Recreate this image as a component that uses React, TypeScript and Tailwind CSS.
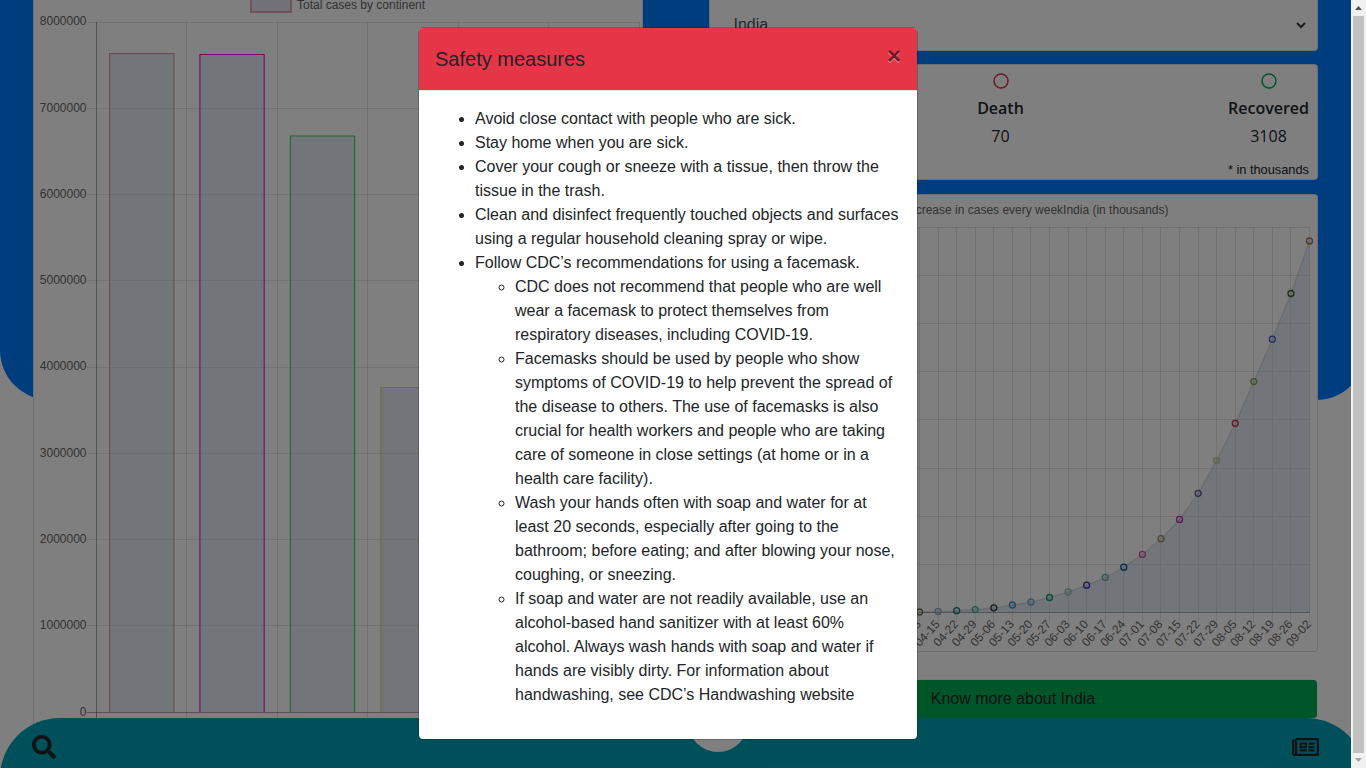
import React from "react";
import { FaSearch, FaRegNewspaper } from "react-icons/fa";

const barTicks = [
  { label: "8000000", y: 22.5, base: 25 },
  { label: "7000000", y: 108.5, base: 112 },
  { label: "6000000", y: 194.5, base: 198 },
  { label: "5000000", y: 280.5, base: 284 },
  { label: "4000000", y: 367.5, base: 370 },
  { label: "3000000", y: 453.5, base: 457 },
  { label: "2000000", y: 539.5, base: 543 },
  { label: "1000000", y: 625.5, base: 629 },
];

const bars = [
  { x: 109.6, y: 53.5, color: "#dc94a6" },
  { x: 199.9, y: 54.5, color: "#e912e9" },
  { x: 290.4, y: 136, color: "#30d858" },
  { x: 380.9, y: 387.5, color: "#e4d86c" },
];

const BAR_WIDTH = 64.3;

const cases = [
  { label: "04-08", y: 612, color: "#68704a" },
  { label: "04-15", y: 611.4, color: "#88a8b8" },
  { label: "04-22", y: 610.7, color: "#16787c" },
  { label: "04-29", y: 609.6, color: "#2cc07c" },
  { label: "05-06", y: 607.8, color: "#2c3c30" },
  { label: "05-13", y: 605, color: "#2c98cc" },
  { label: "05-20", y: 602, color: "#70a8d8" },
  { label: "05-27", y: 597.5, color: "#0c9c6c" },
  { label: "06-03", y: 592, color: "#94c49c" },
  { label: "06-10", y: 585.2, color: "#4828b4" },
  { label: "06-17", y: 577.4, color: "#68b4ac" },
  { label: "06-24", y: 567.2, color: "#0c549c" },
  { label: "07-01", y: 554.4, color: "#d8549c" },
  { label: "07-08", y: 538.7, color: "#a09058" },
  { label: "07-15", y: 519.4, color: "#c42c90" },
  { label: "07-22", y: 493.3, color: "#64508c" },
  { label: "07-29", y: 460.4, color: "#c8cc9c" },
  { label: "08-05", y: 423.3, color: "#c42c44" },
  { label: "08-12", y: 381.6, color: "#80ac44" },
  { label: "08-19", y: 339.2, color: "#4c60c4" },
  { label: "08-26", y: 293.5, color: "#485c24" },
  { label: "09-02", y: 241, color: "#a87050" },
];

const lineX = (i: number) => 1309.5 - (cases.length - 1 - i) * 18.57;
const gridX = (i: number) => Math.floor(lineX(i)) + 0.5;
const linePoints = cases.map((c, i) => `${lineX(i)},${c.y}`).join(" ");
const lineRows = [227.5, 275.5, 323.5, 371.5, 419.5, 468.5, 516.5, 564.5];

function BarChart() {
  return (
    <svg width="608" height="768" viewBox="34 0 608 768" fontSize="12" fill="#666" className="block">
      <rect x="251" y="-1" width="40" height="13" fill="#dfe5ef" stroke="#e4a4b4" strokeWidth="2" />
      <text x="297" y="9">Total cases by continent</text>
      <g stroke="rgba(0,0,0,0.1)">
        {barTicks.map((t) => (
          <line key={t.y} x1="87" x2="640" y1={t.y} y2={t.y} />
        ))}
        {[186.5, 277.5, 367.5, 458.5, 548.5, 639.5].map((x) => (
          <line key={x} x1={x} x2={x} y1="22" y2="723" />
        ))}
      </g>
      <g stroke="rgba(0,0,0,0.35)">
        <line x1="96.5" x2="96.5" y1="22" y2="723" />
        <line x1="87" x2="640" y1="712.5" y2="712.5" />
      </g>
      {barTicks.map((t) => (
        <text key={t.label} x="86.5" y={t.base} textAnchor="end">{t.label}</text>
      ))}
      <text x="86.5" y="716" textAnchor="end">0</text>
      {bars.map((b) => (
        <g key={b.x}>
          <rect x={b.x} y={b.y} width={BAR_WIDTH} height={712.5 - b.y} fill="rgba(170,190,220,0.3)" />
          <path d={`M${b.x} 712.5V${b.y}h${BAR_WIDTH}V712.5`} fill="none" stroke={b.color} strokeWidth="1.1" />
        </g>
      ))}
    </svg>
  );
}

function LineChart() {
  return (
    <svg width="607" height="456" viewBox="710 195 607 456" fontSize="12" fill="#666" className="block">
      <text x="1168.5" y="214" textAnchor="end">Increase in cases every weekIndia (in thousands)</text>
      <g stroke="rgba(0,0,0,0.1)">
        {lineRows.map((y) => (
          <line key={y} x1="740" x2="1310" y1={y} y2={y} />
        ))}
        {cases.map((c, i) => (
          <line key={c.label} x1={gridX(i)} x2={gridX(i)} y1="227" y2="622" />
        ))}
      </g>
      <line x1="740" x2="1310" y1="612.5" y2="612.5" stroke="rgba(0,0,0,0.35)" />
      <polygon points={`${linePoints} 1309.5,612.5 919,612.5`} fill="rgba(170,190,220,0.3)" />
      <polyline points={linePoints} fill="none" stroke="rgba(0,0,0,0.1)" strokeWidth="1.5" />
      {cases.map((c, i) => (
        <g key={c.label}>
          <circle cx={lineX(i)} cy={c.y} r="3" fill="rgba(170,190,220,0.3)" stroke={c.color} strokeWidth="1.3" />
          <text
            textAnchor="end"
            transform={`translate(${lineX(i) + 0.8} 623.2) rotate(-48)`}
            y="2"
          >
            {c.label}
          </text>
        </g>
      ))}
    </svg>
  );
}

function Stat({ color, title, value }: { color: string; title: string; value: string }) {
  return (
    <div className="flex flex-col items-center font-['Open_Sans','Noto_Sans',sans-serif] text-base leading-6">
      <svg width="16" height="16" viewBox="0 0 16 16" className="mb-[7px]">
        <circle cx="8" cy="8" r="7" fill="none" stroke={color} strokeWidth="1.5" />
      </svg>
      <div className="font-semibold">{title}</div>
      <div className="mt-1">{value}</div>
    </div>
  );
}

function Scrollbar() {
  return (
    <div className="flex h-full w-[15px] shrink-0 flex-col items-center bg-[#f1f1f1]">
      <svg width="15" height="16" viewBox="0 0 15 16" className="shrink-0">
        <path d="M4 10h7L7.5 6z" fill="#505050" />
      </svg>
      <div className="w-[11px] flex-1 bg-[#c1c1c1]" />
      <svg width="15" height="15" viewBox="0 0 15 15" className="shrink-0">
        <path d="M4 5h7L7.5 9z" fill="#a3a3a3" />
      </svg>
    </div>
  );
}

function SafetyModal() {
  return (
    <div className="absolute left-[418px] top-[27px] w-[500px] rounded-[5px] border border-black/20 bg-white bg-clip-padding">
      <div className="flex items-start justify-between rounded-t-[4px] border-b border-[#dee2e6] bg-[#e63546] p-4">
        <h5 className="text-xl leading-[30px]">Safety measures</h5>
        <button className="text-2xl font-bold leading-6 text-black opacity-50 [text-shadow:0_1px_0_#fff]">×</button>
      </div>
      <div className="p-4">
        <ul className="mb-4 list-disc pl-10">
          <li>Avoid close contact with people who are sick.</li>
          <li>Stay home when you are sick.</li>
          <li>Cover your cough or sneeze with a tissue, then throw the tissue in the trash.</li>
          <li>Clean and disinfect frequently touched objects and surfaces using a regular household cleaning spray or wipe.</li>
          <li>
            Follow CDC’s recommendations for using a facemask.
            <ul className="list-[circle] pl-10">
              <li>CDC does not recommend that people who are well wear a facemask to protect themselves from respiratory diseases, including COVID-19.</li>
              <li>Facemasks should be used by people who show symptoms of COVID-19 to help prevent the spread of the disease to others. The use of facemasks is also crucial for health workers and people who are taking care of someone in close settings (at home or in a health care facility).</li>
              <li>Wash your hands often with soap and water for at least 20 seconds, especially after going to the bathroom; before eating; and after blowing your nose, coughing, or sneezing.</li>
              <li>If soap and water are not readily available, use an alcohol-based hand sanitizer with at least 60% alcohol. Always wash hands with soap and water if hands are visibly dirty. For information about handwashing, see CDC’s Handwashing website</li>
            </ul>
          </li>
        </ul>
      </div>
    </div>
  );
}

export default function App() {
  return (
    <div className="flex h-[768px] w-[1366px] overflow-hidden bg-white font-['Liberation_Sans',Arial,sans-serif] text-base leading-6 text-[#212529]">
      <div className="relative h-full min-w-0 flex-1 overflow-hidden">
        <div className="absolute left-0 top-0 h-[400px] w-[1366px] rounded-b-[50px] bg-[#007bff]" />

        <div className="relative flex h-full gap-[66px] pl-[33px]">
          <section className="h-full w-[610px] shrink-0 border-x border-black/[.125] bg-white">
            <BarChart />
          </section>

          <section className="flex w-[609px] shrink-0 flex-col">
            <div className="flex h-[51px] items-center justify-between rounded-b border border-t-0 border-black/[.125] bg-white pl-[23.5px] pr-[11px] text-[#495057]">
              <span className="leading-6">India</span>
              <svg width="10" height="7" viewBox="0 0 10 7">
                <path d="M1 1l4 4 4-4" fill="none" stroke="#343a40" strokeWidth="2" />
              </svg>
            </div>

            <div className="mt-[13px] flex h-[116px] flex-col rounded border border-black/[.125] bg-white px-2 pt-2">
              <div className="flex justify-between">
                <div className="w-[55px]" />
                <Stat color="#dc3545" title="Death" value="70" />
                <Stat color="#00ab53" title="Recovered" value="3108" />
              </div>
              <div className="mt-3 text-right text-[12.8px] leading-5">* in thousands</div>
            </div>

            <div className="mt-[14px] h-[458px] rounded border border-black/[.125] bg-white">
              <LineChart />
            </div>

            <button className="mt-7 h-[38px] w-[608px] rounded bg-[#00aa52] shadow-[0_0_1px_rgba(0,0,0,0.4)]">
              Know more about India
            </button>
          </section>
        </div>

        <div className="absolute left-0 top-[718px] flex h-[60px] w-[1366px] items-start justify-between rounded-t-[60px] bg-[#00a1b8] pl-8 pr-[47px] pt-[17px]">
          <FaSearch className="h-6 w-6" />
          <FaRegNewspaper className="h-6 w-[27px]" />
        </div>
        <div className="absolute left-[688px] top-[692px] h-[60px] w-[60px] rounded-full bg-white" />

        <div className="absolute inset-0 bg-black/50" />
        <SafetyModal />
      </div>
      <Scrollbar />
    </div>
  );
}
